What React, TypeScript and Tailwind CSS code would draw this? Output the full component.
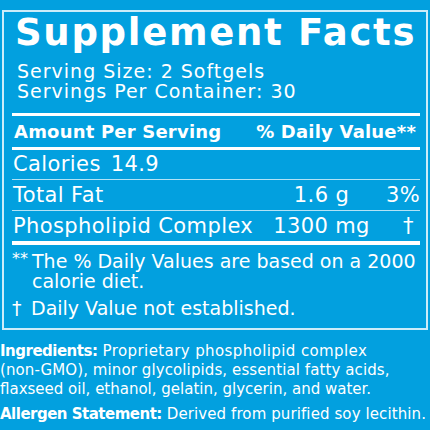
import React from "react";

const font = { fontFamily: '"DejaVu Sans", sans-serif' };

export default function App() {
  return (
    <div
      className="w-[430px] h-[430px] overflow-hidden bg-[#02a0df] text-white pt-[10px]"
      style={font}
    >
      <div className="mx-[2px] h-[320px] border-2 border-white/80 pl-[8px] pr-[6px]">
        <div className="h-[42px] leading-[42px] text-[37px] font-bold tracking-[1.7px] pl-[3px] whitespace-nowrap">
          Supplement Facts
        </div>
        <div className="mt-[7px] pl-[5px] text-[19px] leading-[20px] tracking-[1px] whitespace-nowrap">
          <div>Serving Size: 2 Softgels</div>
          <div>Servings Per Container: 30</div>
        </div>
        <div className="mt-[12px] h-[3px] bg-white" />
        <div className="h-[31px] flex items-center justify-between text-[18px] font-bold tracking-[0.2px] pl-[2px] pr-[4px] whitespace-nowrap">
          <span>Amount Per Serving</span>
          <span>% Daily Value**</span>
        </div>
        <div className="h-[3px] bg-white" />
        <div className="h-[29px] flex items-center gap-[10px] text-[21px] tracking-[0.4px] pl-[1px] whitespace-nowrap">
          <span>Calories</span>
          <span>14.9</span>
        </div>
        <div className="h-px bg-white/70" />
        <div className="h-[30px] grid grid-cols-[1fr_101px_48px] items-center text-[21px] tracking-[0.4px] pl-[1px] whitespace-nowrap">
          <span>Total Fat</span>
          <span className="text-center">1.6 g</span>
          <span className="text-right">3%</span>
        </div>
        <div className="h-px bg-white/70" />
        <div className="h-[30px] grid grid-cols-[1fr_101px_48px] items-center text-[21px] tracking-[0.4px] pl-[1px] whitespace-nowrap">
          <span>Phospholipid Complex</span>
          <span className="text-center">1300 mg</span>
          <span className="text-right pr-[6px]">†</span>
        </div>
        <div className="h-[4px] bg-white" />
        <div className="mt-[6px] flex text-[19px] leading-[20px]">
          <span className="w-[20px] shrink-0 text-[16px] leading-[16px]">**</span>
          <span>The % Daily Values are based on a 2000 calorie diet.</span>
        </div>
        <div className="mt-[7px] flex text-[19px] leading-[20px]">
          <span className="w-[19px] shrink-0">†</span>
          <span>Daily Value not established.</span>
        </div>
      </div>
      <div className="mt-[12px] text-[15px] leading-[19px] whitespace-nowrap">
        <div className="tracking-[0.4px]">
          <span className="font-bold tracking-[-0.5px]">Ingredients:</span> Proprietary phospholipid complex
        </div>
        <div className="tracking-[0.1px]">(non-GMO), minor glycolipids, essential fatty acids,</div>
        <div className="tracking-[0px]">flaxseed oil, ethanol, gelatin, glycerin, and water.</div>
        <div className="mt-[6px] tracking-[0.1px]">
          <span className="font-bold tracking-[-0.5px]">Allergen Statement:</span> Derived from purified soy lecithin.
        </div>
      </div>
    </div>
  );
}
